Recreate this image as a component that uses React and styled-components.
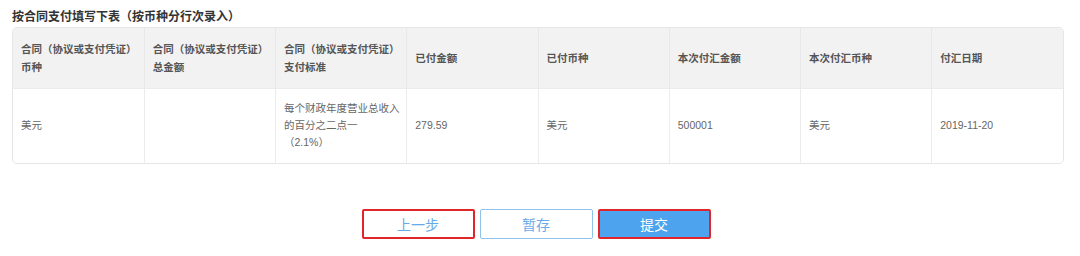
import React from "react";
import styled, { createGlobalStyle } from "styled-components";

const Global = createGlobalStyle`
  html, body { margin: 0; padding: 0; background: #fff; }
  body { font-family: "Liberation Sans", "Noto Sans CJK SC", sans-serif; }
`;

const Page = styled.div`
  width: 1080px;
  height: 256px;
  box-sizing: border-box;
  padding: 8px 16px 0 12px;
  display: flex;
  flex-direction: column;
`;

const Title = styled.div`
  font-size: 12px;
  line-height: 18px;
  font-weight: bold;
  color: #333;
  margin-bottom: 1px;
`;

const TableWrap = styled.div`
  border: 1px solid #e6e6e6;
  border-radius: 5px;
  overflow: hidden;
`;

const Table = styled.table`
  width: 100%;
  border-collapse: collapse;
  table-layout: fixed;
`;

const HeadRow = styled.tr`
  height: 60px;
  background: #f2f2f2;
  border-bottom: 1px solid #ececec;
`;

const BodyRow = styled.tr`
  height: 75px;
`;

const Th = styled.th`
  text-align: left;
  vertical-align: middle;
  padding: 0 7px 0 8px;
  font-size: 10.5px;
  line-height: 18px;
  font-weight: bold;
  color: #555;
  border-left: 1px solid #e8e8e8;
  &:first-child { border-left: none; }
`;

const Td = styled.td`
  text-align: left;
  vertical-align: middle;
  padding: 0 6px 0 8px;
  font-size: 10.5px;
  line-height: 17px;
  color: #666;
  border-left: 1px solid #ececec;
  &:first-child { border-left: none; }
`;

const Actions = styled.div`
  display: flex;
  justify-content: center;
  gap: 5px;
  margin-top: 45px;
  padding-right: 4px;
`;

const Button = styled.button`
  width: 113px;
  height: 30px;
  box-sizing: border-box;
  font-family: "Liberation Sans", "Noto Sans CJK SC", sans-serif;
  font-size: 14px;
  border-radius: 2px;
  cursor: pointer;
  background: ${(p) => (p.$primary ? "#4ea3ee" : "#fff")};
  color: ${(p) => (p.$primary ? "#fff" : "#66aae8")};
  border: ${(p) => (p.$marked ? "2px solid #e0262a" : "1px solid #8fc3ee")};
`;

const headers = [
  ["合同（协议或支付凭证）", "币种"],
  ["合同（协议或支付凭证）", "总金额"],
  ["合同（协议或支付凭证）", "支付标准"],
  ["已付金额"],
  ["已付币种"],
  ["本次付汇金额"],
  ["本次付汇币种"],
  ["付汇日期"],
];

export default function App() {
  return (
    <>
      <Global />
      <Page>
        <Title>按合同支付填写下表（按币种分行次录入）</Title>
        <TableWrap>
          <Table>
            <thead>
              <HeadRow>
                {headers.map((h, i) => (
                  <Th key={i}>
                    {h.map((line, j) => (
                      <div key={j}>{line}</div>
                    ))}
                  </Th>
                ))}
              </HeadRow>
            </thead>
            <tbody>
              <BodyRow>
                <Td>美元</Td>
                <Td></Td>
                <Td>
                  每个财政年度营业总收入
                  <br />
                  的百分之二点一
                  <br />
                  （2.1%）
                </Td>
                <Td>279.59</Td>
                <Td>美元</Td>
                <Td>500001</Td>
                <Td>美元</Td>
                <Td>2019-11-20</Td>
              </BodyRow>
            </tbody>
          </Table>
        </TableWrap>
        <Actions>
          <Button $marked>上一步</Button>
          <Button>暂存</Button>
          <Button $primary $marked>提交</Button>
        </Actions>
      </Page>
    </>
  );
}
